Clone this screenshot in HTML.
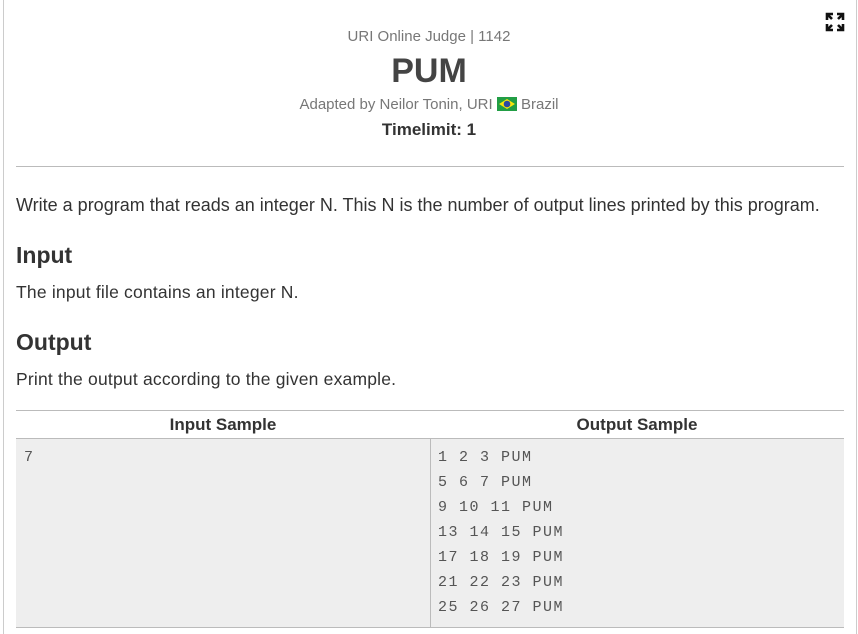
<!DOCTYPE html>
<html><head><style>
body{margin:0;width:858px;height:633px;background:#fff;font-family:"Liberation Sans",sans-serif;position:relative;overflow:hidden}
.frame{position:absolute;left:3px;right:1px;top:-1px;bottom:-1px;border-left:1px solid #ccc;border-right:1px solid #ccc}
.c{position:absolute;left:0;width:858px;text-align:center}
.t{position:absolute;left:16px;color:#333;white-space:nowrap}
h2{position:absolute;left:16px;margin:0;font-size:23px;color:#333;font-weight:bold}
.mono{font-family:"Liberation Mono",monospace;font-size:15px;letter-spacing:1.5px;color:#555;line-height:25px}
</style></head><body>
<div class="frame"></div>
<svg style="position:absolute;left:825px;top:12px" width="20" height="20" viewBox="0 0 20 20"><g fill="none" stroke="#111" stroke-width="2.6"><path d="M2 8V2h6M2 2l5 5"/><path d="M12 2h6v6M18 2l-5 5"/><path d="M2 12v6h6M2 18l5-5"/><path d="M18 12v6h-6M18 18l-5-5"/></g></svg>
<div class="c" style="top:28px;font-size:15px;color:#777">URI Online Judge | 1142</div>
<div class="c" style="top:52px;font-size:34px;font-weight:bold;color:#444">PUM</div>
<div class="c" style="top:96px;font-size:15px;color:#777">Adapted by Neilor Tonin, URI <svg width="20" height="14" style="vertical-align:-2px"><rect width="20" height="14" fill="#229e45"/><path d="M10 2L18 7 10 12 2 7z" fill="#f8e509"/><circle cx="10" cy="7" r="3.3" fill="#2b49a3"/></svg> Brazil</div>
<div class="c" style="top:120px;font-size:17px;font-weight:bold;color:#333">Timelimit: 1</div>
<div style="position:absolute;left:16px;width:828px;top:166px;border-top:1px solid #bbb"></div>
<div class="t" style="top:195px;font-size:18px">Write a program that reads an integer N. This N is the number of output lines printed by this program.</div>
<h2 style="top:242px">Input</h2>
<div class="t" style="top:282px;font-size:17.5px;letter-spacing:.2px">The input file contains an integer N.</div>
<h2 style="top:329px">Output</h2>
<div class="t" style="top:369px;font-size:17.5px;letter-spacing:.2px">Print the output according to the given example.</div>
<div style="position:absolute;left:16px;width:828px;top:410px;height:216px;border-top:1px solid #bbb;border-bottom:1px solid #bbb">
<div style="height:27px;border-bottom:1px solid #bbb;display:flex;font-weight:bold;font-size:17px;color:#333;line-height:27px"><div style="width:414px;text-align:center">Input Sample</div><div style="width:414px;text-align:center">Output Sample</div></div>
<div style="display:flex;height:188px;background:#eee">
<div class="mono" style="width:406px;padding:6px 0 0 8px;border-right:1px solid #bbb">7</div>
<div class="mono" style="padding:6px 0 0 7px">1 2 3 PUM<br>5 6 7 PUM<br>9 10 11 PUM<br>13 14 15 PUM<br>17 18 19 PUM<br>21 22 23 PUM<br>25 26 27 PUM</div>
</div></div>
</body></html>
